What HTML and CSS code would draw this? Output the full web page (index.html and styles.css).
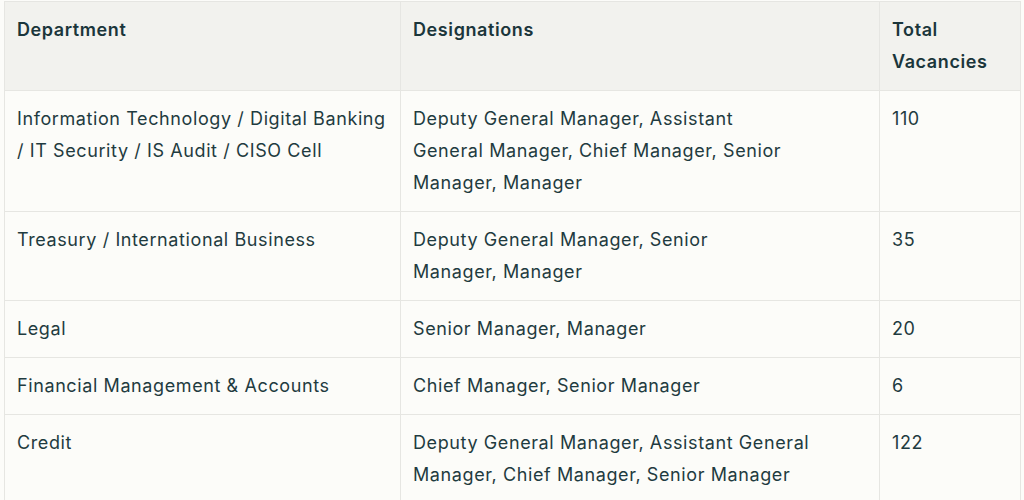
FILE: index.html
```html
<!DOCTYPE html>
<html lang="en">
<head>
<meta charset="utf-8">
<title>Vacancies</title>
<link rel="stylesheet" href="styles.css">
</head>
<body>
<div class="wrap">
<table class="vac">
  <colgroup>
    <col class="c1"><col class="c2"><col class="c3">
  </colgroup>
  <thead>
    <tr><th>Department</th><th>Designations</th><th>Total<br>Vacancies</th></tr>
  </thead>
  <tbody>
    <tr>
      <td>Information Technology / Digital Banking<br>/ IT Security / IS Audit / CISO Cell</td>
      <td>Deputy General Manager, Assistant<br>General Manager, Chief Manager, Senior<br>Manager, Manager</td>
      <td>110</td>
    </tr>
    <tr>
      <td>Treasury / International Business</td>
      <td>Deputy General Manager, Senior<br>Manager, Manager</td>
      <td>35</td>
    </tr>
    <tr>
      <td>Legal</td>
      <td>Senior Manager, Manager</td>
      <td>20</td>
    </tr>
    <tr>
      <td>Financial Management &amp; Accounts</td>
      <td>Chief Manager, Senior Manager</td>
      <td>6</td>
    </tr>
    <tr>
      <td>Credit</td>
      <td>Deputy General Manager, Assistant General<br>Manager, Chief Manager, Senior Manager</td>
      <td>122</td>
    </tr>
  </tbody>
</table>
</div>
</body>
</html>
```

FILE: styles.css
```css
html, body {
  margin: 0;
  padding: 0;
  background: #fcfcf9;
}
.wrap {
  padding: 1px 4px 0 4px;
}
.vac {
  width: 1016px;
  border-collapse: collapse;
  table-layout: fixed;
  font-family: Inter, "Liberation Sans", Arial, sans-serif;
  font-size: 18px;
  line-height: 32px;
  letter-spacing: 0.6px;
  color: #1f3b40;
}
.c1 { width: 396px; }
.c2 { width: 479px; }
.c3 { width: 141px; }
.vac th, .vac td {
  border: 1px solid #e6e6e2;
  padding: 12px 12px;
  text-align: left;
  vertical-align: top;
  white-space: nowrap;
}
.vac th {
  background: #f2f2ee;
  font-weight: 600;
  color: #1b363b;
}
.vac td {
  background: #fcfcf9;
}
```
